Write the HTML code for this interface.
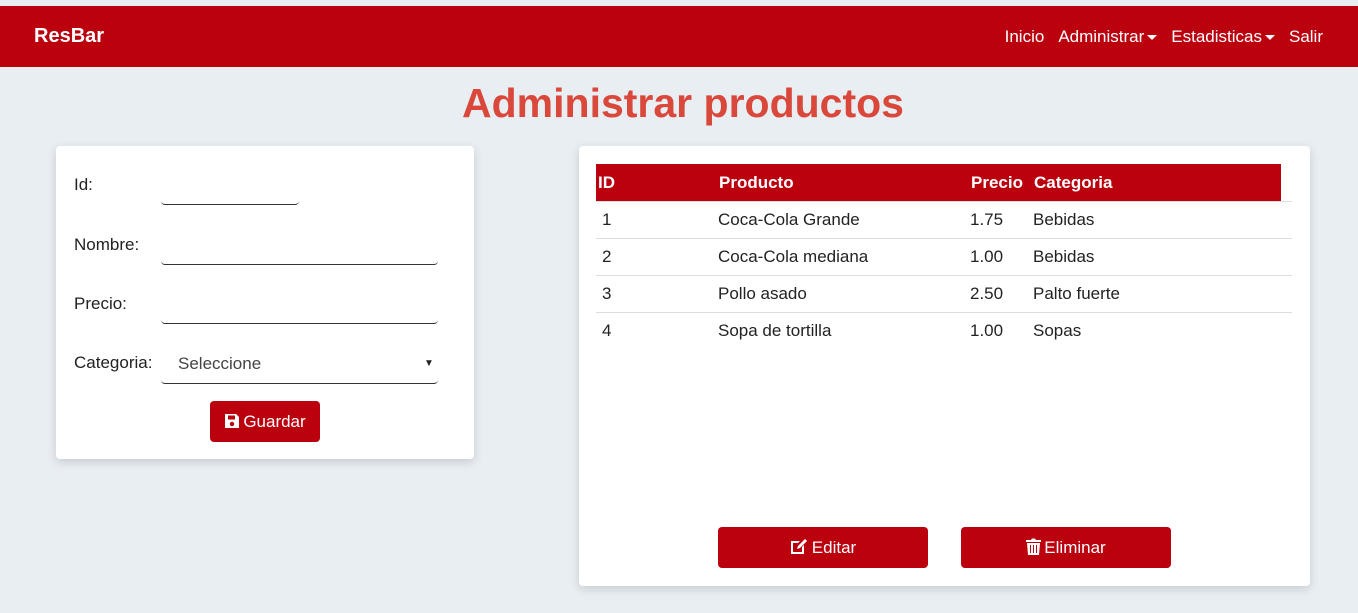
<!DOCTYPE html>
<html><head><style>
body{margin:0;width:1358px;height:613px;background:#e9eef2;font-family:"Liberation Sans",sans-serif;position:relative;overflow:hidden;color:#222}
.nav{position:absolute;top:6px;left:0;width:1358px;height:61px;background:#bb000e;color:#fff}
.brand{position:absolute;left:34px;top:19px;font-weight:bold;font-size:20px}
.links{position:absolute;right:35px;top:21px;font-size:17px}
.links span{margin-left:14px}
.car{display:inline-block;border-left:5px solid transparent;border-right:5px solid transparent;border-top:5px solid #fff;vertical-align:middle;margin-left:3px}
h1{position:absolute;top:80px;left:0;width:1366px;text-align:center;margin:0;font-size:41px;color:#d9483b;font-weight:bold}
.card{position:absolute;background:#fff;border-radius:4px;box-shadow:0 3px 10px rgba(0,0,0,.15)}
.lbl{position:absolute;left:18px;font-size:17px}
.line{position:absolute;border-bottom:1px solid #333;border-radius:0 0 4px 4px;height:8px}
.btn{position:absolute;background:#bb000e;color:#fff;border-radius:4px;font-size:17px;text-align:center;line-height:41px}
.btn svg{vertical-align:-2px;margin-right:3px}
table{position:absolute;left:17px;top:18px;border-collapse:collapse;font-size:17px;width:696px}
th{background:#bb000e;color:#fff;text-align:left;height:37px;padding:0 0 0 2px;font-weight:bold}
th.e{background:#fff}
td{height:36px;border-top:1px solid #ddd;padding:0 0 0 1px}
td:first-child{padding-left:6px}
</style></head><body>
<div class="nav"><div class="brand">ResBar</div>
<div class="links"><span>Inicio</span><span>Administrar<i class="car"></i></span><span>Estadisticas<i class="car"></i></span><span>Salir</span></div></div>
<h1>Administrar productos</h1>
<div class="card" style="left:56px;top:146px;width:418px;height:313px">
<div class="lbl" style="top:29px">Id:</div><div class="line" style="left:105px;top:50px;width:138px"></div>
<div class="lbl" style="top:89px">Nombre:</div><div class="line" style="left:105px;top:110px;width:277px"></div>
<div class="lbl" style="top:148px">Precio:</div><div class="line" style="left:105px;top:169px;width:277px"></div>
<div class="lbl" style="top:207px">Categoria:</div><div class="line" style="left:105px;top:229px;width:277px"></div>
<div style="position:absolute;left:122px;top:208px;font-size:17px;color:#444">Seleccione</div>
<div style="position:absolute;left:368px;top:212px;font-size:10px">▼</div>
<div class="btn" style="left:154px;top:255px;width:110px"><svg width="16" height="16" viewBox="0 0 16 16"><path d="M1 1h11l3 3v11H1z" fill="#fff"/><rect x="4" y="2.5" width="7" height="4" fill="#bb000e"/><circle cx="8" cy="11" r="2.2" fill="#bb000e"/></svg>Guardar</div>
</div>
<div class="card" style="left:579px;top:146px;width:731px;height:440px">
<table><tr><th style="width:119px">ID</th><th style="width:250px">Producto</th><th style="width:61px">Precio</th><th>Categoria</th><th class="e" style="width:9px"></th></tr>
<tr><td>1</td><td>Coca-Cola Grande</td><td>1.75</td><td colspan="2">Bebidas</td></tr>
<tr><td>2</td><td>Coca-Cola mediana</td><td>1.00</td><td colspan="2">Bebidas</td></tr>
<tr><td>3</td><td>Pollo asado</td><td>2.50</td><td colspan="2">Palto fuerte</td></tr>
<tr><td>4</td><td>Sopa de tortilla</td><td>1.00</td><td colspan="2">Sopas</td></tr></table>
<div class="btn" style="left:139px;top:381px;width:210px"><svg width="19" height="17" viewBox="0 0 19 17"><path d="M1 3h9l-2 2H3v9h9V9l2-2v9H1z" fill="#fff"/><path d="M7 11l1-3 7-7 2 2-7 7z" fill="#fff"/></svg>Editar</div>
<div class="btn" style="left:382px;top:381px;width:210px"><svg width="15" height="17" viewBox="0 0 15 17"><path d="M0 2h5l1-1.5h3L10 2h5v2H0z" fill="#fff"/><path d="M1 5h13l-1 12H2z" fill="#fff"/><path d="M4.5 7v8M7.5 7v8M10.5 7v8" stroke="#bb000e" stroke-width="1"/></svg>Eliminar</div>
</div>
</body></html>
